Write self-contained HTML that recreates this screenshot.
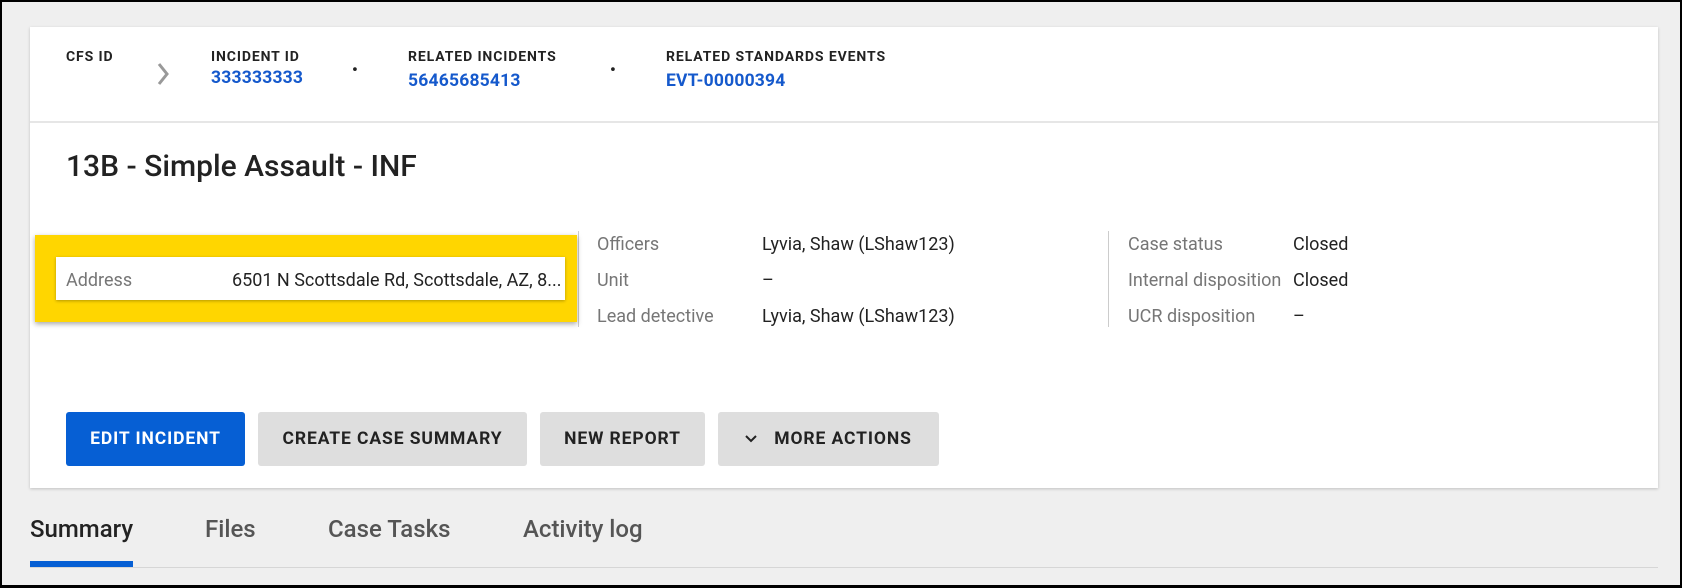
<!DOCTYPE html>
<html><head><style>
*{box-sizing:border-box;margin:0;padding:0}
body{width:1682px;height:588px;background:#000;font-family:"Roboto","Liberation Sans",sans-serif;overflow:hidden;position:relative}
.bg{position:absolute;left:2px;top:2px;right:2px;bottom:3px;background:#efefef}
.card{position:absolute;left:30px;top:27px;width:1628px;height:461px;background:#fff;box-shadow:0 1px 3px rgba(0,0,0,.2)}
.hdiv{position:absolute;left:30px;top:121px;width:1628px;height:2px;background:#e6e6e6}
.a{position:absolute;white-space:nowrap}
.lab{font-size:14px;font-weight:bold;color:#222;letter-spacing:.9px;top:49px}
.val{font-size:17.5px;font-weight:bold;color:#1559cc;top:71px;letter-spacing:.2px}
.dot{font-size:16px;font-weight:bold;top:60px;color:#222}
.fl{font-size:18px;color:#767676}
.fv{font-size:18px;color:#222}
.btn{position:absolute;top:412px;height:54px;border-radius:3px;background:#dedede;color:#222;font-size:17.5px;font-weight:bold;letter-spacing:.9px;display:flex;align-items:center;justify-content:center}
.tab{position:absolute;top:515px;font-size:24px;color:#555}
</style></head><body>
<div class="bg"></div>
<div class="card"></div>
<div class="hdiv"></div>
<div class="a lab" style="left:66px">CFS ID</div>
<svg class="a" style="left:156px;top:62px" width="14" height="24"><path d="M3 2 L11 12 L3 22" stroke="#999" stroke-width="3" fill="none"/></svg>
<div class="a lab" style="left:211px">INCIDENT ID</div>
<div class="a val" style="left:211px;top:68px">333333333</div>
<div class="a dot" style="left:352px">•</div>
<div class="a lab" style="left:408px">RELATED INCIDENTS</div>
<div class="a val" style="left:408px">56465685413</div>
<div class="a dot" style="left:610px">•</div>
<div class="a lab" style="left:666px">RELATED STANDARDS EVENTS</div>
<div class="a val" style="left:666px">EVT-00000394</div>
<div class="a" style="left:66px;top:149px;font-size:30px;font-weight:500;color:#222">13B - Simple Assault - INF</div>

<div class="a fl" style="left:66px;top:302px">District, Beat, Zone</div>
<div class="a" style="left:578px;top:231px;width:1px;height:96px;background:#ccc"></div>
<div class="a" style="left:1108px;top:231px;width:1px;height:96px;background:#ccc"></div>
<div class="a fl" style="left:597px;top:234px">Officers</div>
<div class="a fv" style="left:762px;top:234px">Lyvia, Shaw (LShaw123)</div>
<div class="a fl" style="left:597px;top:270px">Unit</div>
<div class="a fv" style="left:762px;top:270px">–</div>
<div class="a fl" style="left:597px;top:306px">Lead detective</div>
<div class="a fv" style="left:762px;top:306px">Lyvia, Shaw (LShaw123)</div>
<div class="a fl" style="left:1128px;top:234px">Case status</div>
<div class="a fv" style="left:1293px;top:234px">Closed</div>
<div class="a fl" style="left:1128px;top:270px">Internal disposition</div>
<div class="a fv" style="left:1293px;top:270px">Closed</div>
<div class="a fl" style="left:1128px;top:306px">UCR disposition</div>
<div class="a fv" style="left:1293px;top:306px">–</div>

<div class="a" style="left:35px;top:235px;width:542px;height:87px;background:#ffd600;box-shadow:0 2px 5px rgba(0,0,0,.35)"></div>
<div class="a" style="left:56px;top:257px;width:509px;height:43px;background:#fff;box-shadow:0 1px 3px rgba(0,0,0,.3)"></div>
<div class="a fl" style="left:66px;top:270px">Address</div>
<div class="a fv" style="left:232px;top:270px">6501 N Scottsdale Rd, Scottsdale, AZ, 8...</div>

<div class="btn" style="left:66px;width:179px;background:#065fd4;color:#fff">EDIT INCIDENT</div>
<div class="btn" style="left:258px;width:269px">CREATE CASE SUMMARY</div>
<div class="btn" style="left:540px;width:165px">NEW REPORT</div>
<div class="btn" style="left:718px;width:221px"><svg width="12" height="8" style="margin-right:17px"><path d="M1 1 L6 6 L11 1" stroke="#222" stroke-width="2" fill="none"/></svg>MORE ACTIONS</div>

<div class="tab" style="left:30px;color:#222;font-weight:500">Summary</div>
<div class="tab" style="left:205px;font-weight:500">Files</div>
<div class="tab" style="left:328px;font-weight:500">Case Tasks</div>
<div class="tab" style="left:523px;font-weight:500">Activity log</div>
<div class="a" style="left:30px;top:567px;width:1628px;height:1px;background:#d6d6d6"></div>
<div class="a" style="left:30px;top:561px;width:103px;height:6px;background:#065fd4"></div>
</body></html>
